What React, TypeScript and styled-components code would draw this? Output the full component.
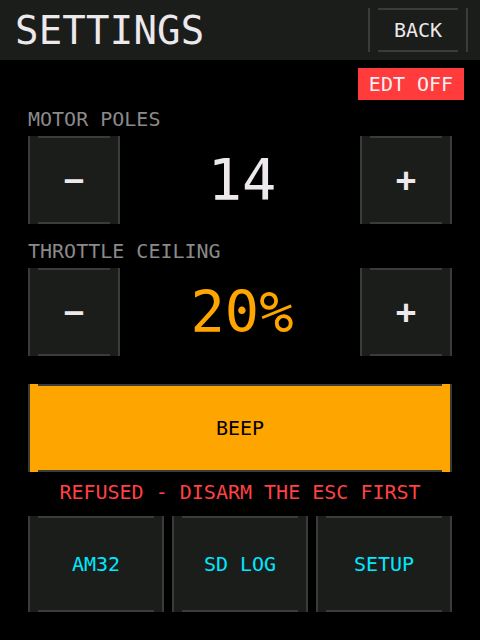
import React from "react";
import styled, { createGlobalStyle } from "styled-components";

const Global = createGlobalStyle`
  html, body { margin: 0; padding: 0; background: #000; }
  body { font-family: "DejaVu Sans Mono", "Liberation Mono", monospace; }
  * { box-sizing: border-box; }
`;

const LINE = "#3a3c3a";
const PANEL = "#1a1d1a";

const Screen = styled.div`
  width: 480px;
  height: 640px;
  background: #000;
  display: flex;
  flex-direction: column;
  overflow: hidden;
`;

const Header = styled.header`
  height: 60px;
  background: ${PANEL};
  display: flex;
  align-items: center;
  justify-content: space-between;
  padding: 0 12px 0 15px;
  flex-shrink: 0;
`;

const Title = styled.h1`
  margin: 0;
  font-family: "DejaVu Sans Mono", monospace;
  font-weight: normal;
  font-size: 39px;
  letter-spacing: 0.2px;
  line-height: 1;
  color: #ece8ec;
`;

const Btn = styled.button<{ $bg?: string; $fg?: string; $w?: string; $h: string }>`
  width: ${(p) => p.$w ?? "100%"};
  height: ${(p) => p.$h};
  padding: 0;
  margin: 0;
  border: none;
  border-left: 2px solid ${LINE};
  border-right: 2px solid ${LINE};
  background:
    linear-gradient(${LINE}, ${LINE}) top center / calc(100% - 16px) 2px no-repeat,
    linear-gradient(${LINE}, ${LINE}) bottom center / calc(100% - 16px) 2px no-repeat,
    ${(p) => p.$bg ?? PANEL};
  color: ${(p) => p.$fg ?? "#ece8ec"};
  font-family: "DejaVu Sans Mono", monospace;
  font-size: 20px;
  line-height: 1;
  display: flex;
  align-items: center;
  justify-content: center;
  cursor: pointer;
`;

const Sign = styled.span`
  font-size: 34px;
  line-height: 1;
  font-weight: bold;
`;

const Body = styled.main`
  display: flex;
  flex-direction: column;
  padding: 0 28px;
`;

const BadgeRow = styled.div`
  display: flex;
  justify-content: flex-end;
  margin: 8px -12px 0 0;
`;

const Badge = styled.div`
  width: 106px;
  height: 32px;
  background: #ff3b3b;
  color: #f4f0f4;
  font-size: 20px;
  display: flex;
  align-items: center;
  justify-content: center;
  line-height: 1;
`;

const Label = styled.div<{ $top: number }>`
  margin-top: ${(p) => p.$top}px;
  height: 20px;
  line-height: 20px;
  font-size: 20px;
  color: #8a8a8a;
`;

const Stepper = styled.div`
  margin-top: 7px;
  display: grid;
  grid-template-columns: 92px 1fr 92px;
  height: 88px;
`;

const Value = styled.div<{ $color: string }>`
  display: flex;
  align-items: center;
  justify-content: center;
  font-size: 57px;
  line-height: 1;
  color: ${(p) => p.$color};
  padding-left: 4px;
`;

const Beep = styled.div`
  margin-top: 28px;
`;

const Warning = styled.div`
  margin-top: 10px;
  height: 20px;
  line-height: 20px;
  font-size: 20px;
  color: #ff4044;
  text-align: center;
  white-space: pre;
`;

const Grid = styled.div`
  margin-top: 14px;
  display: grid;
  grid-template-columns: repeat(3, 1fr);
  gap: 8px;
`;

export default function App() {
  return (
    <Screen>
      <Global />
      <Header>
        <Title>SETTINGS</Title>
        <Btn $w="100px" $h="44px">BACK</Btn>
      </Header>
      <Body>
        <BadgeRow>
          <Badge>EDT OFF</Badge>
        </BadgeRow>
        <Label $top={9}>MOTOR POLES</Label>
        <Stepper>
          <Btn $h="88px"><Sign>−</Sign></Btn>
          <Value $color="#ece8ec">14</Value>
          <Btn $h="88px"><Sign>+</Sign></Btn>
        </Stepper>
        <Label $top={17}>THROTTLE CEILING</Label>
        <Stepper>
          <Btn $h="88px"><Sign>−</Sign></Btn>
          <Value $color="#ffa500">20%</Value>
          <Btn $h="88px"><Sign>+</Sign></Btn>
        </Stepper>
        <Beep>
          <Btn $h="88px" $bg="#ffa500" $fg="#000">BEEP</Btn>
        </Beep>
        <Warning>REFUSED - DISARM THE ESC FIRST</Warning>
        <Grid>
          <Btn $h="96px" $fg="#00e8ff">AM32</Btn>
          <Btn $h="96px" $fg="#00e8ff">SD LOG</Btn>
          <Btn $h="96px" $fg="#00e8ff">SETUP</Btn>
        </Grid>
      </Body>
    </Screen>
  );
}
